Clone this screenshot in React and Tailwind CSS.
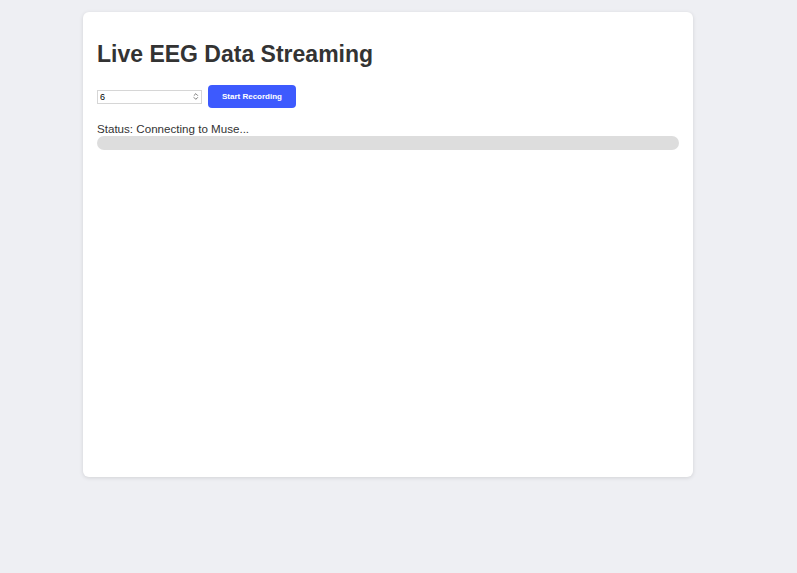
import { useState } from "react";

function Spinner() {
  return (
    <svg viewBox="0 0 8 12" className="h-[9px] w-[6px]" aria-hidden="true">
      <path d="M1.5 4.5 L4 2 L6.5 4.5" fill="none" stroke="#555" strokeWidth="1.1" strokeLinecap="round" strokeLinejoin="round" />
      <path d="M1.5 7.5 L4 10 L6.5 7.5" fill="none" stroke="#555" strokeWidth="1.1" strokeLinecap="round" strokeLinejoin="round" />
    </svg>
  );
}

export default function App() {
  const [duration, setDuration] = useState("6");

  return (
    <div
      className="min-h-[573px] w-full bg-[#eeeff3] pt-[12px]"
      style={{ fontFamily: '"Liberation Sans", Arial, sans-serif' }}
    >
      <div className="ml-[83px] flex h-[465px] w-[610px] flex-col rounded-[6px] bg-white px-[14px] pt-[28px] shadow-[0_1px_4px_rgba(0,0,0,0.12)]">
        <h1 className="text-[23px] leading-[28px] font-bold text-[#333333]">Live EEG Data Streaming</h1>

        <div className="mt-[17px] flex items-center gap-[6px]">
          <div className="flex h-[14px] w-[105px] items-center border border-[#d6d6d6] bg-white pl-[2px] pr-[2px]">
            <input
              type="text"
              value={duration}
              onChange={(event) => setDuration(event.target.value)}
              className="w-full min-w-0 bg-transparent text-[9px] leading-none text-black outline-none"
            />
            <Spinner />
          </div>
          <button
            type="button"
            className="h-[23px] w-[88px] rounded-[4px] bg-[#3d5afe] text-[8px] font-semibold text-white"
          >
            Start Recording
          </button>
        </div>

        <p className="mt-[14px] text-[11.6px] leading-[14px] text-[#333333]">Status: Connecting to Muse...</p>
        <div className="h-[14px] w-full rounded-[7px] bg-[#dddddd]" />
      </div>
    </div>
  );
}
